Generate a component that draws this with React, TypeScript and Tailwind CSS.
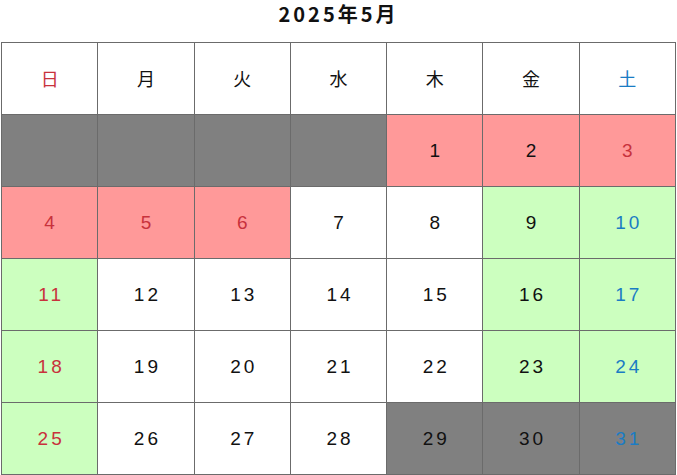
const days = ['日', '月', '火', '水', '木', '金', '土'];

type Cell = { d?: number; bg: string; red?: boolean };

const G = 'bg-[#808080]';
const P = 'bg-[#ff9999]';
const L = 'bg-[#ccffbf]';
const W = 'bg-white';

const weeks: Cell[][] = [
  [{ bg: G }, { bg: G }, { bg: G }, { bg: G }, { d: 1, bg: P }, { d: 2, bg: P }, { d: 3, bg: P, red: true }],
  [{ d: 4, bg: P, red: true }, { d: 5, bg: P, red: true }, { d: 6, bg: P, red: true }, { d: 7, bg: W }, { d: 8, bg: W }, { d: 9, bg: L }, { d: 10, bg: L }],
  [{ d: 11, bg: L }, { d: 12, bg: W }, { d: 13, bg: W }, { d: 14, bg: W }, { d: 15, bg: W }, { d: 16, bg: L }, { d: 17, bg: L }],
  [{ d: 18, bg: L }, { d: 19, bg: W }, { d: 20, bg: W }, { d: 21, bg: W }, { d: 22, bg: W }, { d: 23, bg: L }, { d: 24, bg: L }],
  [{ d: 25, bg: L }, { d: 26, bg: W }, { d: 27, bg: W }, { d: 28, bg: W }, { d: 29, bg: G }, { d: 30, bg: G }, { d: 31, bg: G }],
];

function colorFor(i: number, red?: boolean) {
  if (red || i === 0) return 'text-[#c8323c]';
  if (i === 6) return 'text-[#1a7cc4]';
  return 'text-[#111]';
}

export default function App() {
  return (
    <div
      className="w-[677px] h-[475px] bg-white"
      style={{ fontFamily: '"Noto Sans CJK JP", "Noto Sans", sans-serif' }}
    >
      <div className="h-[42px] flex justify-center">
        <h1 className="text-[20px] font-bold tracking-[3px] leading-[28px] text-[#111]">2025年5月</h1>
      </div>
      <table className="ml-[1px] w-[675px] border-collapse table-fixed">
        <thead>
          <tr className="h-[72px]">
            {days.map((d, i) => (
              <th key={d} className={`border border-[#6b6b6b] bg-white font-normal text-[18px] leading-none pb-[1px] ${colorFor(i)}`}>
                {d}
              </th>
            ))}
          </tr>
        </thead>
        <tbody>
          {weeks.map((w, r) => (
            <tr key={r} className="h-[72px]">
              {w.map((c, i) => (
                <td
                  key={i}
                  className={`border border-[#6b6b6b] text-center font-['Liberation_Sans',sans-serif] text-[19px] leading-none tracking-[3px] pl-[3px] ${c.bg} ${colorFor(i, c.red)}`}
                >
                  {c.d}
                </td>
              ))}
            </tr>
          ))}
        </tbody>
      </table>
    </div>
  );
}
